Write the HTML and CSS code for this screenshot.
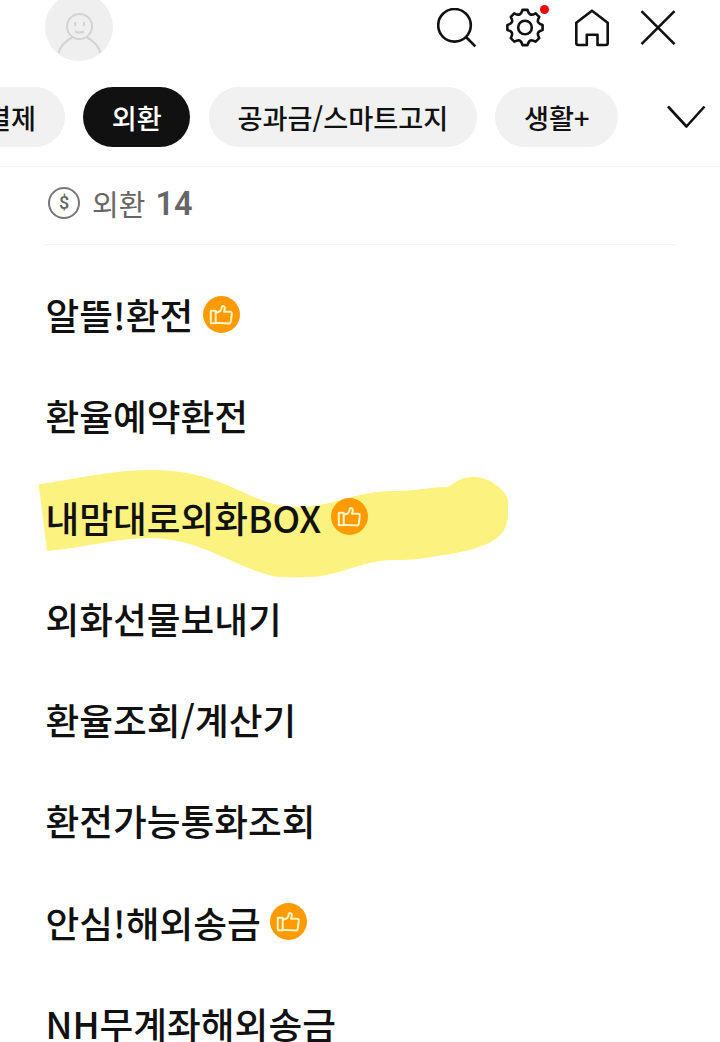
FILE: index.html
```
<!DOCTYPE html>
<html lang="ko">
<head>
    <meta charset="UTF-8">
    <meta name="viewport" content="width=device-width, initial-scale=1.0">
    <title>외환</title>
    <link rel="stylesheet" href="styles.css">
</head>
<body>
    <!-- thumb badge used by the recommended menus -->
    <svg class="symbols" width="0" height="0">
        <symbol id="thumb" viewBox="0 0 37 37">
            <circle cx="18.5" cy="18.5" r="18.5" fill="#ff9b00"/>
            <path d="M7.800 14.800h4.900v12.400H7.800zM12.700 17.200l4.600-2.200 1.200-2.400.6-2.400q2.800-.6 2.700 2.400l-.7 3.200h6q1.900.2 1.700 2l-1 7.700q-.4 2-2.200 2l-12.900-.7" fill="none" stroke="#fff6c4" stroke-width="2" stroke-linejoin="round"/>
        </symbol>
    </svg>

    <header>
        <div class="avatar">
            <svg width="68" height="68" viewBox="0 0 68 68" fill="none" stroke="#d3d3d3" stroke-width="2">
                <circle cx="34.5" cy="33.5" r="12.5"/>
                <path d="M13.5 60C16 52 20 48 27 44.5M42 44.5c7 3.500 11 7.500 13.500 15.500"/>
                <path d="M30.200 29v4M39 29v4M30 38.500q4.500 2.200 9 0"/>
            </svg>
        </div>
        <nav class="tools">
            <a href="#"><svg width="40" height="40" viewBox="0 0 40 40"><circle cx="17.500" cy="17.300" r="16.300"/><path d="M29 29l9.300 9.300"/></svg></a>
            <a href="#" class="setting"><svg width="40" height="40" viewBox="-21 -19.500 40 40"><path d="M-2.500-17.600L2.500-17.600C4-12.500 6-11.700 10.700-14.200L14.200-10.700C11.700-6 12.500-4 17.600-2.500L17.600 2.500C12.500 4 11.700 6 14.200 10.700L10.700 14.200C6 11.700 4 12.500 2.500 17.600L-2.500 17.600C-4 12.500-6 11.700-10.700 14.200L-14.200 10.700C-11.700 6-12.500 4-17.600 2.500L-17.600-2.500C-12.500-4-11.700-6-14.200-10.700L-10.700-14.200C-6-11.700-4-12.500-2.500-17.600Z"/><circle r="6.800"/></svg><span class="dot"></span></a>
            <a href="#"><svg width="40" height="40" viewBox="0 0 40 40"><path d="M5.300 14.800L21 2.700l15.700 12.100v20.200q0 2-2 2h-8.200V26.700H15.800V37H7.300q-2 0-2-2z"/></svg></a>
            <a href="#"><svg width="40" height="40" viewBox="0 0 40 40"><path d="M3.500 3.200l33 33M36.500 3.200l-33 33"/></svg></a>
        </nav>
    </header>

    <div class="tabs">
        <ul>
            <li><a href="#">결제</a></li>
            <li class="active"><a href="#">외환</a></li>
            <li><a href="#">공과금/스마트고지</a></li>
            <li><a href="#">생활+</a></li>
        </ul>
        <svg class="arrow" width="40" height="26" viewBox="0 0 40 26"><path d="M2 2.500l18.500 20L38.500 2.500"/></svg>
    </div>

    <section class="main">
        <h2>
            <svg width="34" height="34" viewBox="0 0 34 34"><circle cx="17" cy="17" r="15" fill="none" stroke="#777" stroke-width="2"/><text x="17" y="23" text-anchor="middle">$</text></svg>
            <span class="name">외환</span>
            <span class="count">14</span>
        </h2>
        <ul class="menu">
            <li><a href="#">알뜰!환전</a><svg class="badge"><use href="#thumb"/></svg></li>
            <li><a href="#">환율예약환전</a></li>
            <li class="marked">
                <svg class="marker" width="490" height="130" viewBox="0 0 490 130"><path d="M8.500 24.500C50 18 85 10 122 10C197 10 220 47 266 47C300 48 325 31 363 31C390 31 397 27 418 27C429 19 435 16.500 445 17C461 18 474 29 478 39V54C478 70 469 78 459 83C439 92 421 94 400 97C380 102 361 98 345 102C323 106 302 117 279 117Q260 118 245 116.500C203 107 172 79 121 78C87 78 52 88 17 91Q13 57 8.500 24.500Z"/></svg>
                <a href="#">내맘대로외화BOX</a><svg class="badge"><use href="#thumb"/></svg>
            </li>
            <li><a href="#">외화선물보내기</a></li>
            <li><a href="#">환율조회/계산기</a></li>
            <li><a href="#">환전가능통화조회</a></li>
            <li><a href="#">안심!해외송금</a><svg class="badge"><use href="#thumb"/></svg></li>
            <li><a href="#">NH무계좌해외송금</a></li>
        </ul>
    </section>
</body>
</html>
```
FILE: styles.css
```
body {
    font-family: "Noto Sans CJK KR", sans-serif;
    font-weight: 500;
    background: #fff;
    color: #111;
    margin: 0;
    height: 1042px;
    overflow: hidden;
}
ul {
    list-style: none;
    margin: 0;
    padding: 0;
}
a {
    color: inherit;
    text-decoration: none;
}
svg {
    display: block;
    flex-shrink: 0;
}
header {
    display: flex;
    justify-content: space-between;
    align-items: center;
    height: 54px;
    padding: 0 42px 0 45px;
}
.avatar {
    width: 68px;
    height: 68px;
    border-radius: 50%;
    background: #efefef;
    overflow: hidden;
}
.tools {
    display: flex;
    gap: 27px;
    padding-top: 2px;
}
.tools svg,
.arrow {
    fill: none;
    stroke: #111;
    stroke-width: 2.6;
    stroke-linejoin: round;
}
.setting {
    position: relative;
}
.dot {
    position: absolute;
    top: -3px;
    right: -5px;
    width: 9px;
    height: 9px;
    border-radius: 50%;
    background: #f50808;
}
.tabs {
    display: flex;
    justify-content: space-between;
    align-items: center;
    height: 60px;
    padding: 33px 14px 19px 0;
    border-bottom: 1px solid #f3f3f3;
}
.tabs ul {
    display: flex;
    gap: 18.7px;
    margin-left: -42.5px;
}
.tabs li {
    height: 60px;
    line-height: 61px;
    padding: 0 28.5px;
    border-radius: 30px;
    background: #f1f1f1;
    font-size: 27.2px;
    white-space: nowrap;
}
.tabs li.active {
    background: #111;
    color: #fff;
}
.main {
    padding: 0 44px;
}
.main h2 {
    display: flex;
    align-items: center;
    height: 72px;
    margin: 0;
    padding: 0 0 5px 3px;
    border-bottom: 1px solid #f2f2f2;
    color: #666;
}
.main h2 text {
    font: 500 18px Roboto, sans-serif;
    fill: #666;
}
.name {
    margin-left: 11px;
    font-size: 29px;
    font-weight: 400;
}
.count {
    margin: 2px 0 0 10px;
    font: 600 32.5px Roboto, sans-serif;
}
.menu {
    padding: 19px 0 0 1.5px;
}
.menu li {
    display: flex;
    align-items: center;
    position: relative;
    height: 101.25px;
    font-size: 36.7px;
}
.menu a {
    margin-top: -1px;
}
.badge {
    width: 37px;
    height: 37px;
    margin: -1px 0 0 9.5px;
}
/* highlighter stroke behind the row */
.marker {
    position: absolute;
    left: -15.5px;
    top: -7px;
    z-index: -1;
    fill: #fbf280;
}
```
